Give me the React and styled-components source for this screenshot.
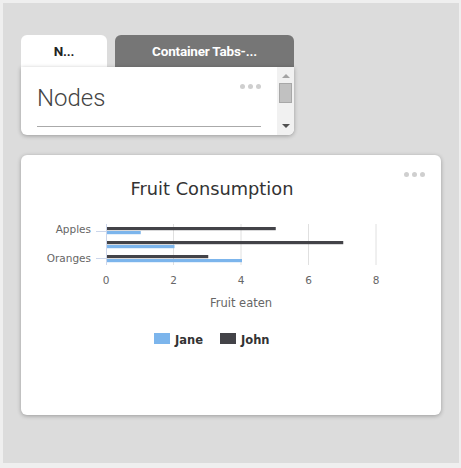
import React from "react";
import styled, { createGlobalStyle } from "styled-components";

const Global = createGlobalStyle`
  html, body { margin: 0; padding: 0; background: #efefef; }
  body { font-family: Roboto, "Liberation Sans", sans-serif; }
`;

const Frame = styled.div`
  margin: 3px 0 0 3px;
  width: 456px;
  height: 460px;
  background: #dcdcdc;
  box-sizing: border-box;
  padding: 32px 0 0 18px;
  display: flex;
  flex-direction: column;
  gap: 20px;
`;

const TabWidget = styled.div`
  width: 273px;
  display: flex;
  flex-direction: column;
`;

const TabBar = styled.div`
  display: flex;
  gap: 8px;
  height: 32px;
`;

const Tab = styled.div`
  width: ${(p) => p.$w}px;
  height: 32px;
  border-radius: 6px 6px 0 0;
  background: ${(p) => (p.$active ? "#ffffff" : "#767676")};
  color: ${(p) => (p.$active ? "#222" : "#fff")};
  font-family: Roboto, sans-serif;
  font-weight: 700;
  font-size: 13.5px;
  display: flex;
  align-items: center;
  justify-content: center;
  letter-spacing: -0.2px;
`;

const TabPanel = styled.div`
  height: 68px;
  background: #fff;
  border-radius: 0 0 6px 6px;
  box-shadow: 0 1px 4px rgba(0, 0, 0, 0.3);
  display: flex;
  overflow: hidden;
`;

const PanelBody = styled.div`
  flex: 1;
  position: relative;
  padding: 12px 16px 0 16px;
  display: flex;
  flex-direction: column;
`;

const NodesTitle = styled.div`
  font-family: Roboto, sans-serif;
  font-weight: 300;
  font-size: 24px;
  color: #444;
  line-height: 38px;
  height: 47px;
  flex: none;
  border-bottom: 1px solid #aaa;
`;

const Dots = styled.div`
  position: absolute;
  top: ${(p) => p.$top}px;
  right: ${(p) => p.$right}px;
  display: flex;
  gap: 3px;
  & > span {
    width: 5px;
    height: 5px;
    border-radius: 50%;
    background: #cfcfcf;
  }
`;

const Scrollbar = styled.div`
  width: 17px;
  background: #f1f1f1;
  display: flex;
  flex-direction: column;
  align-items: center;
`;

const Arrow = styled.div`
  width: 0;
  height: 0;
  border-left: 4px solid transparent;
  border-right: 4px solid transparent;
  ${(p) =>
    p.$up
      ? "border-bottom: 4px solid #a3a3a3; margin-top: 7px;"
      : "border-top: 4px solid #505050; margin-top: auto; margin-bottom: 7px;"}
`;

const Thumb = styled.div`
  width: 13px;
  height: 20px;
  background: #c1c1c1;
  border: 1px solid #a8a8a8;
  box-sizing: border-box;
  margin-top: 5px;
`;

const ChartCard = styled.div`
  position: relative;
  width: 420px;
  height: 260px;
  background: #fff;
  border-radius: 6px;
  box-shadow: 0 1px 4px rgba(0, 0, 0, 0.3);
`;

const ChartSvg = styled.svg`
  display: block;
  font-family: "DejaVu Sans", "Lucida Grande", sans-serif;
`;

const unit = 33.75;
const x0 = 85;
const data = [
  { name: "Apples", jane: 1, john: 5, y: 72 },
  { name: "", jane: 2, john: 7, y: 86 },
  { name: "Oranges", jane: 4, john: 3, y: 100 },
];

function Chart() {
  return (
    <ChartSvg width="420" height="260" viewBox="0 0 420 260">
      <text x="191" y="40" textAnchor="middle" fontSize="17.8" fill="#333">
        Fruit Consumption
      </text>
      {[0, 2, 4, 6, 8].map((v) => (
        <g key={v}>
          {v > 0 && (
            <line x1={x0 + v * unit} x2={x0 + v * unit} y1="69" y2="110" stroke="#e0e0e0" strokeWidth="1" />
          )}
          <text x={x0 + v * unit} y="129" textAnchor="middle" fontSize="10.5" fill="#666">
            {v}
          </text>
        </g>
      ))}
      <line x1={x0 + 0.5} x2={x0 + 0.5} y1="69" y2="110" stroke="#ccd6eb" />
      <line x1="75" x2="85" y1="76.5" y2="76.5" stroke="#ccd6eb" />
      <line x1="75" x2="85" y1="103.5" y2="103.5" stroke="#ccd6eb" />
      {data.map((d) => (
        <g key={d.y}>
          <rect x={x0 + 1} y={d.y} width={d.john * unit} height="3.2" fill="#434348" />
          <rect x={x0 + 1} y={d.y + 4} width={d.jane * unit} height="3.2" fill="#7cb5ec" />
        </g>
      ))}
      <text x="70" y="78" textAnchor="end" fontSize="10.5" fill="#666">Apples</text>
      <text x="70" y="107" textAnchor="end" fontSize="10.5" fill="#666">Oranges</text>
      <text x="220" y="152" textAnchor="middle" fontSize="11.5" fill="#666">Fruit eaten</text>
      <rect x="133" y="178" width="16" height="11" fill="#7cb5ec" />
      <text x="154" y="189" fontSize="11.5" fontWeight="700" fill="#333">Jane</text>
      <rect x="199" y="178" width="16" height="11" fill="#434348" />
      <text x="220" y="189" fontSize="11.5" fontWeight="700" fill="#333">John</text>
    </ChartSvg>
  );
}

export default function App() {
  return (
    <>
      <Global />
      <Frame>
        <TabWidget>
          <TabBar>
            <Tab $active $w={86}>N...</Tab>
            <Tab $w={179}>Container Tabs-...</Tab>
          </TabBar>
          <TabPanel>
            <PanelBody>
              <NodesTitle>Nodes</NodesTitle>
              <Dots $top={17} $right={16}>
                <span /><span /><span />
              </Dots>
            </PanelBody>
            <Scrollbar>
              <Arrow $up />
              <Thumb />
              <Arrow />
            </Scrollbar>
          </TabPanel>
        </TabWidget>
        <ChartCard>
          <Chart />
          <Dots $top={17} $right={16}>
            <span /><span /><span />
          </Dots>
        </ChartCard>
      </Frame>
    </>
  );
}
